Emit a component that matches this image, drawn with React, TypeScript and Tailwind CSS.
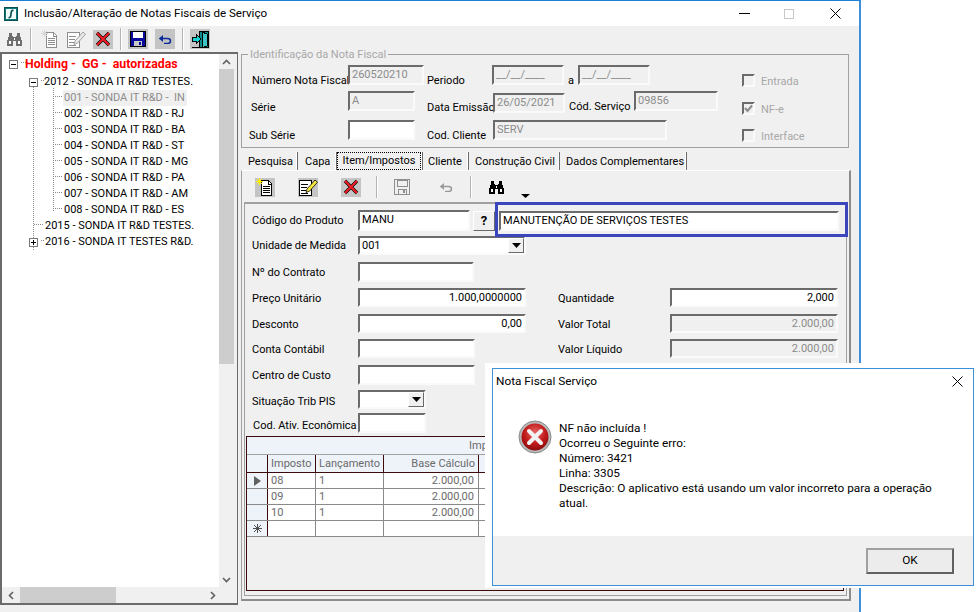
import type { ReactNode } from 'react'

const inset =
  'border-2 border-t-[#6b6b6b] border-l-[#6b6b6b] border-r-[#fafafa] border-b-[#fafafa]'
const raised =
  'border border-t-white border-l-white border-r-[#696969] border-b-[#696969]'

function Label({ w, pl = 0, mt = 8, children }: { w: number; pl?: number; mt?: number; children: ReactNode }) {
  return (
    <div className="shrink-0 leading-[15px] whitespace-nowrap" style={{ width: w, paddingLeft: pl, marginTop: mt }}>
      {children}
    </div>
  )
}

function Field({
  w,
  h = 20,
  mt = 0,
  value,
  off,
  right,
}: {
  w: number
  h?: number
  mt?: number
  value?: string
  off?: boolean
  right?: boolean
}) {
  return (
    <div
      className={`shrink-0 px-[2px] pt-[1px] leading-[14px] whitespace-nowrap overflow-hidden ${inset} ${
        off ? 'bg-[#f0f0f0] text-[#8c8c8c]' : 'bg-white text-black'
      } ${right ? 'text-right' : ''}`}
      style={{ width: w, height: h, marginTop: mt }}
    >
      {value}
    </div>
  )
}

function Check({ label, on, mt, drop = 3 }: { label: string; on?: boolean; mt: number; drop?: number }) {
  return (
    <div className="flex items-center gap-[6px] text-[#a8a8a8] h-[13px]" style={{ marginTop: mt }}>
      <div className={`w-[13px] h-[13px] flex items-center justify-center bg-[#f0f0f0] ${inset}`}>
        {on && (
          <svg width="9" height="9" viewBox="0 0 9 9">
            <path d="M1 4l2.5 3L8 1.5" fill="none" stroke="#8a8a8a" strokeWidth="2" />
          </svg>
        )}
      </div>
      <span style={{ marginTop: drop }}>{label}</span>
    </div>
  )
}

function DropArrow() {
  return (
    <div className={`w-[16px] h-full bg-[#f0f0f0] flex items-center justify-center ${raised}`}>
      <svg width="9" height="5" viewBox="0 0 9 5">
        <path d="M0 0h9L4.500 5z" fill="#000" />
      </svg>
    </div>
  )
}

function Bino({ color = '#000' }: { color?: string }) {
  return (
    <svg width="17" height="15" viewBox="0 0 17 15" shapeRendering="crispEdges">
      <path
        d="M3 1h3v3h1v1h3V4h1V1h3v4h1v3h1v6h-6V9H7v5H1V8h1V5h1z"
        fill={color}
      />
      <path d="M3 9h2v3H3zM12 9h2v3h-2zM8 6h1v2H8z" fill="#fff" />
    </svg>
  )
}

function NewDoc({ off }: { off?: boolean }) {
  const line = off ? '#8e8e8e' : '#000'
  return (
    <svg width="20" height="20" viewBox="0 0 20 20" shapeRendering="crispEdges">
      <path d="M6.500 3.500h7l3 3v12h-10z" fill="#fff" stroke={line} />
      <path d="M13 4v3h3M8 9h7M8 11h7M8 13h7M8 15h7" fill="none" stroke={line} />
      <path
        d="M4.500 1v7M1 4.500h7M2 2l5 5M7 2L2 7"
        stroke={off ? '#d8d8d8' : '#ffee00'}
        strokeWidth="1"
        fill="none"
      />
    </svg>
  )
}

function EditDoc({ off }: { off?: boolean }) {
  const line = off ? '#8e8e8e' : '#000'
  return (
    <svg width="20" height="20" viewBox="0 0 20 20">
      <path d="M1.500 3.500h12v15h-12z" fill="#fff" stroke={line} shapeRendering="crispEdges" />
      <path d="M3 7h7M3 10h6M3 13h5M3 16h7" stroke={line} shapeRendering="crispEdges" />
      <path d="M9 12l8-9 2.500 2.200-8 9L8 15.500z" fill={off ? '#e8e8e8' : '#f7e840'} stroke={line} strokeWidth="0.8" />
    </svg>
  )
}

function RedX() {
  return (
    <div className="w-[20px] h-[19px] bg-[#c4c4c4] flex items-center justify-center">
      <svg width="16" height="16" viewBox="0 0 16 16">
        <path d="M2 2l12 12M14 2L2 14" stroke="#000" strokeWidth="3.200" />
        <path d="M2 2l12 12M14 2L2 14" stroke="#ee1c25" strokeWidth="2.200" />
      </svg>
    </div>
  )
}

function Floppy({ off }: { off?: boolean }) {
  const body = off ? '#f0f0f0' : '#0a0a9c'
  const line = off ? '#8e8e8e' : '#000'
  return (
    <svg width="16" height="16" viewBox="0 0 16 16" shapeRendering="crispEdges">
      <path d="M.5.5h15v15H.5z" fill={body} stroke={line} />
      <path d="M3 1h10v6H3z" fill={off ? '#f0f0f0' : '#fff'} stroke={off ? line : 'none'} />
      <path d="M4 10h8v5H4z" fill={off ? '#f0f0f0' : '#c8c8c8'} stroke={off ? line : 'none'} />
      <path d="M9 11h2v3H9z" fill={off ? '#8e8e8e' : '#0a0a9c'} />
    </svg>
  )
}

function Undo({ color }: { color: string }) {
  return (
    <svg width="14" height="10" viewBox="0 0 14 10">
      <path d="M1.500 4.500h8a3 2.500 0 0 1 0 5H6" fill="none" stroke={color} strokeWidth="1.500" />
      <path d="M5 1L1 4.500 5 8z" fill={color} />
    </svg>
  )
}

function ExitDoor() {
  return (
    <div className="w-[20px] h-[20px] bg-[#c4c4c4] flex items-center justify-center">
      <svg width="19" height="19" viewBox="0 0 19 19" shapeRendering="crispEdges">
        <path d="M8 1h9v16H8z" fill="#0d8a8a" stroke="#000" />
        <path d="M11 2l5 2v12l-5 2z" fill="#3fc4c4" stroke="#000" />
        <path d="M1 7h4V4l5 5-5 5v-3H1z" fill="#17d4d4" stroke="#000" />
        <path d="M1 17.500h17" stroke="#000" />
      </svg>
    </div>
  )
}

function AppLogo() {
  return (
    <svg width="14" height="14" viewBox="0 0 14 14" className="shrink-0">
      <rect x="0.500" y="0.500" width="13" height="13" fill="#0f7c7c" stroke="#0a4f4f" />
      <rect x="2" y="2" width="10" height="10" fill="#f4fbfb" />
      <path d="M9.500 3.500C7.500 3 7.200 4.500 7 7s-.5 4-2.500 3.500" fill="none" stroke="#0a4f4f" strokeWidth="1.700" />
    </svg>
  )
}

function Sep() {
  return <div className="w-[2px] h-[22px] bg-[#b4b4b4] border-r border-white" />
}

function MainToolbar() {
  return (
    <div className="h-[26px] flex items-center pl-[6px] bg-[#f0f0f0]">
      <Bino color="#6e6e6e" />
      <div className="ml-[7px]"><Sep /></div>
      <div className="ml-[8px]"><NewDoc off /></div>
      <div className="ml-[6px]"><EditDoc off /></div>
      <div className="ml-[7px]"><RedX /></div>
      <div className="ml-[7px]"><Sep /></div>
      <div className="ml-[6px] w-[20px] h-[20px] bg-[#c4c4c4] flex items-center justify-center"><Floppy /></div>
      <div className="ml-[7px] w-[20px] h-[20px] bg-[#c4c4c4] flex items-center justify-center"><Undo color="#0a2a9c" /></div>
      <div className="ml-[7px]"><Sep /></div>
      <div className="ml-[6px]"><ExitDoor /></div>
    </div>
  )
}

const units = ['001 - SONDA IT R&D -  IN', '002 - SONDA IT R&D - RJ', '003 - SONDA IT R&D - BA', '004 - SONDA IT R&D - ST', '005 - SONDA IT R&D - MG', '006 - SONDA IT R&D - PA', '007 - SONDA IT R&D - AM', '008 - SONDA IT R&D - ES']

function TreeBox({ open }: { open?: boolean }) {
  return (
    <div className="w-[9px] h-[9px] border border-[#7a7a7a] bg-white flex items-center justify-center relative shrink-0">
      <div className="w-[5px] h-[1px] bg-black" />
      {!open && <div className="absolute w-[1px] h-[5px] bg-black" />}
    </div>
  )
}

function Tree() {
  return (
    <div className="w-[238px] h-[553px] shrink-0 flex flex-col border-t-2 border-l-2 border-b-2 border-r border-[#6b6b6b] bg-[#f0f0f0]">
      <div className="flex flex-1 min-h-0">
        <div className="relative w-[217px] bg-white pt-[2px]">
          <svg className="absolute left-0 top-0" width="217" height="210" shapeRendering="crispEdges">
            <g stroke="#8a8a8a" strokeDasharray="1 1" fill="none">
              <path d="M31.500 33V197M51.500 34V156.500M19 8.500h5M39 26.500h4M51 42.500h10M51 58.500h10M51 74.500h10M51 90.500h10M51 106.500h10M51 122.500h10M51 138.500h10M51 154.500h10M32 170.500h10M39 186.500h4" />
            </g>
          </svg>
          <div className="relative h-[16px] flex items-center pl-[7px]">
            <TreeBox open />
            <span className="ml-[7px] font-bold text-[12.3px] text-[#ff0000] whitespace-pre">Holding -  GG -  autorizadas</span>
          </div>
          <div className="relative h-[16px] mt-[2px] flex items-center pl-[27px]">
            <TreeBox open />
            <span className="ml-[6px]">2012 - SONDA IT R&amp;D TESTES.</span>
          </div>
          {units.map((u, i) => (
            <div key={u} className="relative h-[16px] flex items-center pl-[61px]">
              <span className={`whitespace-pre pl-[1px] pr-[2px] leading-[16px] ${i === 0 ? 'bg-[#f0f0f0] text-[#8c8c8c]' : ''}`}>{u}</span>
            </div>
          ))}
          <div className="relative h-[16px] flex items-center pl-[43px]">2015 - SONDA IT R&amp;D TESTES.</div>
          <div className="relative h-[16px] flex items-center pl-[27px]">
            <TreeBox />
            <span className="ml-[7px]">2016 - SONDA IT TESTES R&amp;D.</span>
          </div>
        </div>
        <div className="w-[15px] flex flex-col bg-[#f0f0f0]">
          <div className="h-[15px] flex items-center justify-center">
            <svg width="9" height="6" viewBox="0 0 9 6"><path d="M1 5l3.500-3.500L8 5" fill="none" stroke="#606060" strokeWidth="1.600" /></svg>
          </div>
          <div className="h-[295px] bg-[#cdcdcd]" />
          <div className="flex-1" />
          <div className="h-[15px] flex items-center justify-center">
            <svg width="9" height="6" viewBox="0 0 9 6"><path d="M1 1l3.500 3.500L8 1" fill="none" stroke="#606060" strokeWidth="1.600" /></svg>
          </div>
        </div>
      </div>
      <div className="h-[16px] flex shrink-0 items-center">
        <div className="w-[18px] flex items-center justify-center">
          <svg width="6" height="9" viewBox="0 0 6 9"><path d="M5 1L1.500 4.500 5 8" fill="none" stroke="#606060" strokeWidth="1.600" /></svg>
        </div>
        <div className="w-[96px] h-full bg-[#cdcdcd]" />
        <div className="w-[88px]" />
        <div className="w-[18px] flex items-center justify-center">
          <svg width="6" height="9" viewBox="0 0 6 9"><path d="M1 1l3.500 3.500L1 8" fill="none" stroke="#606060" strokeWidth="1.600" /></svg>
        </div>
      </div>
    </div>
  )
}

function GroupBox() {
  return (
    <div className="relative w-[608px] h-[94px] mt-[2px] border border-[#a0a0a0] flex">
      <div className="absolute left-[6px] -top-[8px] bg-[#f0f0f0] px-[2px] text-[#a8a8a8] leading-[15px]">Identificação da Nota Fiscal</div>
      <div className="w-[500px] pt-[10px]">
        <div className="flex h-[26px]">
          <Label w={106} pl={10}>Número Nota Fiscal</Label>
          <Field w={76} value="260520210" off />
          <Label w={68} pl={3}>Periodo</Label>
          <Field w={72} value="__/__/____" off />
          <Label w={14} pl={4}>a</Label>
          <Field w={72} value="__/__/____" off />
        </div>
        <div className="flex h-[29px]">
          <Label w={106} pl={9} mt={9}>Série</Label>
          <Field w={67} value="A" off />
          <Label w={78} pl={12} mt={9}>Data Emissão</Label>
          <Field w={72} mt={2} value="26/05/2021" off />
          <Label w={69} pl={4} mt={8}>Cód. Serviço</Label>
          <Field w={84} value="09856" off />
        </div>
        <div className="flex">
          <Label w={106} pl={7}>Sub Série</Label>
          <Field w={67} />
          <Label w={78} pl={12}>Cod. Cliente</Label>
          <Field w={174} value="SERV" off />
        </div>
      </div>
      <div className="pt-[19px]">
        <Check label="Entrada" mt={0} />
        <Check label="NF-e" on mt={15} />
        <Check label="Interface" mt={14} />
      </div>
    </div>
  )
}

function Tab({ w, pl, label }: { w: number; pl: number; label: string }) {
  return (
    <div className="flex shrink-0" style={{ width: w + 2 }}>
      <div className="leading-[20px] whitespace-nowrap overflow-hidden" style={{ width: w, paddingLeft: pl }}>{label}</div>
      <div className="h-[18px] w-[2px] border-r border-r-[#696969] border-l border-l-white" />
    </div>
  )
}

function Tabs() {
  return (
    <div className="flex h-[18px] mt-[4px] ml-[7px] items-start">
      <Tab w={48} pl={0} label="Pesquisa" />
      <Tab w={37} pl={7} label="Capa" />
      <div className="-mt-[1px] h-[20px] w-[84px] shrink-0 bg-[#f0f0f0] pt-[1px]">
        <div className="border border-dotted border-black h-[18px] text-center leading-[16px]">Item/Impostos</div>
      </div>
      <div className="h-[18px] w-[2px] border-r border-r-[#696969] border-l border-l-white" />
      <Tab w={44} pl={5} label="Cliente" />
      <Tab w={89} pl={6} label="Construção Civil" />
      <Tab w={125} pl={6} label="Dados Complementares" />
    </div>
  )
}

function SubToolbar() {
  return (
    <div className="h-[31px] flex items-center pl-[13px] pt-[1px]">
      <div className="w-[20px] h-[19px] bg-[#c4c4c4] flex items-center justify-center"><NewDoc /></div>
      <div className="ml-[23px] w-[20px] h-[19px] bg-[#c4c4c4] flex items-center justify-center"><EditDoc /></div>
      <div className="ml-[23px]"><RedX /></div>
      <div className="ml-[15px]"><Sep /></div>
      <div className="ml-[16px]"><Floppy off /></div>
      <div className="ml-[29px]"><Undo color="#9a9a9a" /></div>
      <div className="ml-[17px]"><Sep /></div>
      <div className="ml-[16px]"><Bino /></div>
      <div className="ml-[16px] mt-[18px]">
        <svg width="9" height="4" viewBox="0 0 9 4" className="block"><path d="M0 0h9L4.500 4z" fill="#000" /></svg>
      </div>
    </div>
  )
}

function FormRow({
  h,
  mt = 0,
  label,
  labelPl = 7,
  drop = 0,
  children,
}: {
  h: number
  mt?: number
  label: string
  labelPl?: number
  drop?: number
  children: ReactNode
}) {
  return (
    <div className="flex items-center" style={{ height: h, marginTop: mt }}>
      <div className="w-[113px] shrink-0 whitespace-nowrap" style={{ paddingLeft: labelPl, marginTop: drop * 2 }}>{label}</div>
      {children}
    </div>
  )
}

function SideField({ label, value, off }: { label: string; value: string; off?: boolean }) {
  return (
    <>
      <div className="ml-[32px] mt-[4px] w-[112px]">{label}</div>
      <Field w={168} h={19} value={value} off={off} right />
    </>
  )
}

function Selectish({ w, h, value }: { w: number; h: number; value?: string }) {
  return (
    <div className={`shrink-0 flex justify-between bg-white ${inset}`} style={{ width: w, height: h }}>
      <span className="px-[2px] pt-[1px] leading-[14px]">{value}</span>
      <DropArrow />
    </div>
  )
}

const cols = [
  { name: 'Imposto', w: 48, right: false },
  { name: 'Lançamento', w: 68, right: false },
  { name: 'Base Cálculo', w: 95, right: true },
]

const taxRows = ['08', '09', '10']

function TaxGrid() {
  return (
    <div className="mt-[3px] ml-[1px] w-[598px] h-[155px] border border-[#3c0a0a] bg-[#f0f0f0] text-[#6a6a6a] overflow-hidden">
      <div className="h-[18px] bg-[#eef3fa] border-b border-[#a0a0a0] pl-[222px] leading-[18px]">Impostos</div>
      <div className="flex h-[18px] bg-[#eef3fa] border-b border-[#3c0a0a]">
        <div className="w-[21px] border-r border-[#3c0a0a]" />
        {cols.map((c) => (
          <div key={c.name} className={`border-r border-[#3c0a0a] px-[3px] leading-[17px] ${c.right ? 'text-right' : ''}`} style={{ width: c.w }}>
            {c.name}
          </div>
        ))}
      </div>
      {taxRows.map((r, i) => (
        <div key={r} className="flex h-[16px] border-b border-[#8a8a8a] bg-white leading-[16px]">
          <div className="w-[21px] bg-[#eef3fa] border-r border-[#3c0a0a] flex items-center justify-center">
            {i === 0 && <svg width="7" height="10" viewBox="0 0 7 10"><path d="M0 0l7 5-7 5z" fill="#606060" /></svg>}
          </div>
          <div className="w-[48px] border-r border-[#8a8a8a] px-[3px]">{r}</div>
          <div className="w-[68px] border-r border-[#8a8a8a] px-[3px]">1</div>
          <div className="w-[95px] border-r border-[#8a8a8a] px-[4px] text-right">2.000,00</div>
        </div>
      ))}
      <div className="flex h-[16px] border-b border-[#8a8a8a] bg-white leading-[15px]">
        <div className="w-[21px] bg-[#eef3fa] border-r border-[#3c0a0a] flex items-center justify-center">
          <svg width="9" height="9" viewBox="0 0 9 9"><path d="M4.500 0v9M0 4.500h9M1 1l7 7M8 1L1 8" stroke="#505050" fill="none" /></svg>
        </div>
        <div className="w-[48px] border-r border-[#8a8a8a]" />
        <div className="w-[68px] border-r border-[#8a8a8a]" />
        <div className="w-[95px] border-r border-[#8a8a8a]" />
      </div>
    </div>
  )
}

function ItemForm() {
  return (
    <div className="relative flex-1 ml-[2px] mr-[2px] mb-[3px] border-t-2 border-t-[#a0a0a0] border-l border-l-[#a0a0a0] border-r border-r-[#a0a0a0] border-b border-b-[#a0a0a0]">
      <div className="absolute left-[250px] -top-[2px] w-[353px] h-[35px] border-[3px] border-[#3b46bc]" />
      <FormRow h={21} mt={6} drop={1} label="Código do Produto">
        <Field w={112} h={21} value="MANU" />
        <div className={`ml-[3px] w-[22px] h-[20px] bg-[#f0f0f0] text-[13px] font-bold flex items-center justify-center ${raised}`}>?</div>
        <div className="ml-[4px]"><Field w={340} value="MANUTENÇÃO DE SERVIÇOS TESTES" /></div>
      </FormRow>
      <FormRow h={19} mt={5} drop={1} label="Unidade de Medida">
        <Selectish w={168} h={19} value="001" />
      </FormRow>
      <FormRow h={20} mt={7} drop={1} label="Nº do Contrato">
        <Field w={116} />
      </FormRow>
      <FormRow h={19} mt={6} drop={2} label="Preço Unitário">
        <Field w={168} h={19} value="1.000,0000000" right />
        <SideField label="Quantidade" value="2,000" />
      </FormRow>
      <FormRow h={19} mt={7} drop={2} label="Desconto">
        <Field w={168} h={19} value="0,00" right />
        <SideField label="Valor Total" value="2.000,00" off />
      </FormRow>
      <FormRow h={19} mt={6} drop={2} label="Conta Contábil">
        <Field w={117} h={19} />
        <div className="ml-[83px] mt-[4px] w-[112px]">Valor Líquido</div>
        <Field w={168} h={19} value="2.000,00" off right />
      </FormRow>
      <FormRow h={20} mt={7} drop={1} label="Centro de Custo">
        <Field w={117} />
      </FormRow>
      <FormRow h={19} mt={5} drop={3} label="Situação Trib PIS">
        <Selectish w={68} h={19} />
      </FormRow>
      <FormRow h={20} mt={4} drop={3} label="Cod. Ativ. Econômica" labelPl={8}>
        <Field w={68} />
      </FormRow>
      <TaxGrid />
    </div>
  )
}

function ErrorIcon() {
  return (
    <svg width="34" height="34" viewBox="0 0 34 34">
      <defs>
        <radialGradient id="errRed" cx="50%" cy="35%" r="65%">
          <stop offset="0%" stopColor="#e86a6a" />
          <stop offset="60%" stopColor="#c21a1a" />
          <stop offset="100%" stopColor="#8a0c0c" />
        </radialGradient>
      </defs>
      <circle cx="17" cy="17" r="16" fill="#b8b8b8" stroke="#8c8c8c" />
      <circle cx="17" cy="17" r="13.500" fill="url(#errRed)" />
      <path d="M11 11l12 12M23 11L11 23" stroke="#f2f2f2" strokeWidth="4" strokeLinecap="round" />
    </svg>
  )
}

function ErrorDialog() {
  return (
    <div className="absolute left-[485px] top-[363px] w-[491px] h-[225px] bg-white pl-[7px] pt-[5px]">
      <div className="w-[482px] h-[218px] border border-[#3c8fd8] bg-white flex flex-col text-[11.8px]">
        <div className="h-[25px] flex items-center justify-between pl-[3px] pr-[10px]">
          <span>Nota Fiscal Serviço</span>
          <svg width="11" height="11" viewBox="0 0 11 11"><path d="M.5.5l10 10M10.500.5l-10 10" stroke="#000" fill="none" /></svg>
        </div>
        <div className="flex-1 flex pl-[25px] pt-[26px]">
          <ErrorIcon />
          <div className="ml-[7px] w-[385px] mt-[1px] leading-[15px]">
            <div>NF não incluída !</div>
            <div>Ocorreu o Seguinte erro:</div>
            <div>Número: 3421</div>
            <div>Linha: 3305</div>
            <div>Descrição: O aplicativo está usando um valor incorreto para a operação atual.</div>
          </div>
        </div>
        <div className="h-[49px] bg-[#f0f0f0] flex justify-end items-start pt-[12px] pr-[19px]">
          <div className="w-[88px] h-[26px] border-2 border-t-[#a0a0a0] border-l-[#a0a0a0] border-r-[#606060] border-b-[#606060] bg-[#ececec] flex items-center justify-center">OK</div>
        </div>
      </div>
    </div>
  )
}

export default function App() {
  return (
    <div className="relative w-[976px] h-[612px] bg-white overflow-hidden font-['Roboto',sans-serif] text-[11px] text-black">
      <div className="w-[861px] h-[612px] border-t border-t-[#1c7fd6] border-r-2 border-r-[#3c8fd8] bg-[#f0f0f0] flex flex-col">
        <div className="h-[25px] bg-white flex items-center pl-[4px] shrink-0">
          <AppLogo />
          <span className="ml-[6px] text-[11.6px]">Inclusão/Alteração de Notas Fiscais de Serviço</span>
          <div className="ml-auto flex items-center pr-[18px]">
            <div className="w-[11px] h-[1px] bg-black" />
            <div className="ml-[34px] w-[10px] h-[10px] border border-[#c8c8c8]" />
            <svg className="ml-[36px]" width="11" height="11" viewBox="0 0 11 11"><path d="M.5.5l10 10M10.500.5l-10 10" stroke="#000" fill="none" /></svg>
          </div>
        </div>
        <MainToolbar />
        <div className="flex">
          <Tree />
          <div className="flex-1 ml-[3px] mr-[8px]">
            <GroupBox />
            <Tabs />
            <div className="h-[431px] w-[610px] flex flex-col border-t border-t-white border-r-2 border-r-[#8c8c8c] border-b-2 border-b-[#8c8c8c] border-l border-l-[#a0a0a0]">
              <SubToolbar />
              <ItemForm />
            </div>
          </div>
        </div>
      </div>
      <ErrorDialog />
    </div>
  )
}
